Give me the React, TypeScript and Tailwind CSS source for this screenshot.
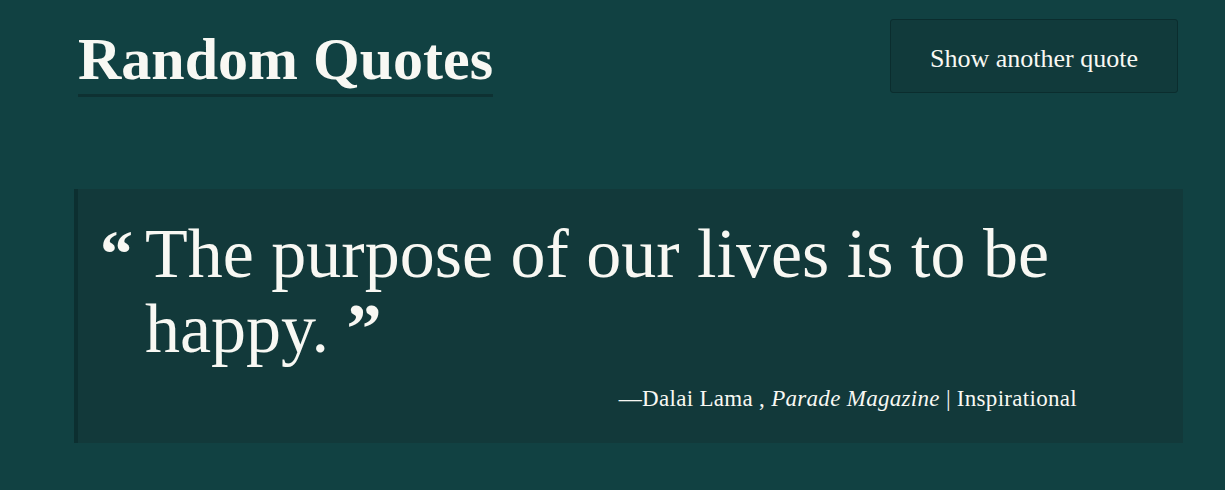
export default function App() {
  return (
    <div className="min-h-[490px] w-full bg-[#114142] text-[#f8f8f3] font-['Liberation_Serif',serif]">
      <div className="ml-[74px] w-[1109px] pt-[19px]">
        <header className="flex items-start justify-between pl-[4px] pr-[5px]">
          <h1 className="mt-[10px] border-b-[3px] border-[#0e3132] pb-[5px] text-[60px] font-bold leading-[60px]">
            Random Quotes
          </h1>
          <button className="h-[74px] w-[288px] rounded-[3px] border border-[#0b2d2e] bg-[#113a3b] pt-[5px] text-[26px] leading-none text-[#f8f8f3]">
            Show another quote
          </button>
        </header>

        <blockquote className="mt-[92px] border-l-4 border-[#0c2f30] bg-[#12393a] pt-[27px] pb-[29px] pl-[22px]">
          <div className="flex">
            <span className="w-[45px] shrink-0 text-[66px] font-bold leading-[75px]">
              “
            </span>
            <div className="w-[932px]">
              <p className="text-[70px] leading-[75px]">
                The purpose of our lives is to be happy.&nbsp;<b className="font-bold">”</b>
              </p>
              <p className="mt-[18px] text-right text-[23px] leading-[30px] tracking-[0.3px]">
                —Dalai Lama , <cite className="italic">Parade Magazine</cite> | Inspirational
              </p>
            </div>
          </div>
        </blockquote>
      </div>
    </div>
  );
}
